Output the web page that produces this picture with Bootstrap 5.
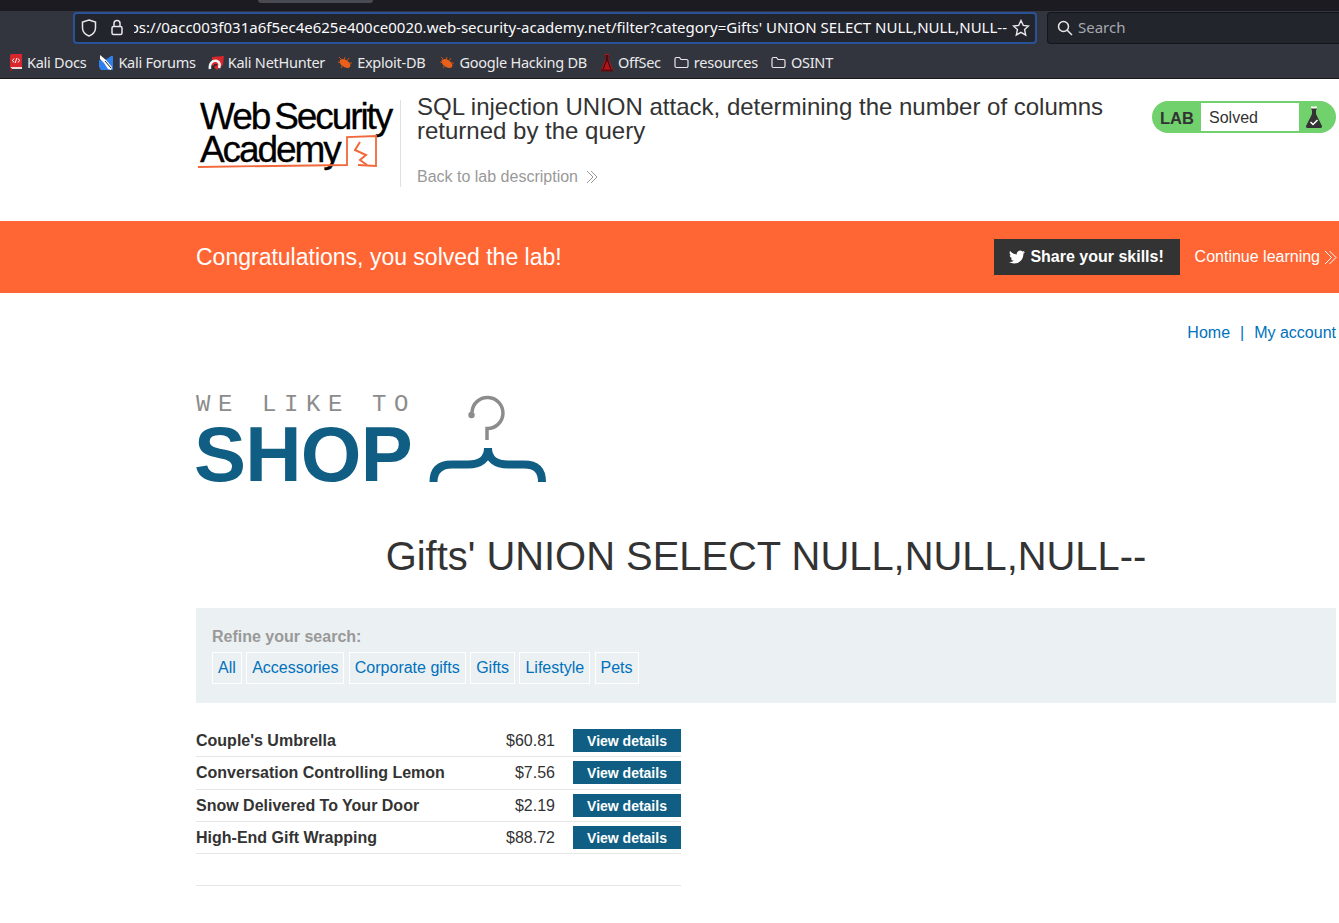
<!DOCTYPE html>
<html lang="en">
<head>
  <meta charset="UTF-8" />
  <title>SQL injection UNION attack</title>
  <link href="https://cdn.jsdelivr.net/npm/bootstrap@5.3.0/dist/css/bootstrap.min.css" rel="stylesheet" />
  <style>
    html, body { height: 923px; overflow: hidden; }
    body { font-family: "Liberation Sans", Arial, sans-serif; font-size: 16px; color: #333; background: #fff; }
    a { text-decoration: none; color: #0071bc; }

    /* browser chrome */
    .browser { height: 79px; background: #32353d; border-bottom: 1px solid #17181c; font-family: "Noto Sans", sans-serif; }
    .tabstrip { height: 11px; background: #1c1b22; padding-left: 258px; }
    .tabstrip-active { width: 115px; height: 3px; background: #4a4b52; border-radius: 0 0 3px 3px; }
    .toolbar { height: 33px; padding-left: 73px; gap: 10px; }
    .urlbar { width: 964px; height: 32px; background: #23252c; border: 2px solid #2a5298; border-radius: 4px; color: #fbfbfe; padding: 0 5px 0 6px; }
    .urltext { width: 873px; margin-left: 10px; overflow: hidden; font-size: 15px; white-space: nowrap; letter-spacing: 0; flex-shrink: 0; }
    .urltext span { flex-shrink: 0; }
    .lockicon { margin-left: 13px; }
    .searchbar { flex: 1; height: 32px; background: #23252c; border: 1px solid #14151a; border-right: 0; border-radius: 4px 0 0 4px; color: #a8a9b0; font-size: 15px; padding-left: 9px; gap: 5px; }
    .bookmarks { height: 34px; padding: 3px 0 0 9px; color: #eaeaec; font-size: 14.5px; letter-spacing: -.25px; gap: 12px; }
    .bookmarks span { gap: 4px; }
    .bookmarks .foldermark { gap: 5px; margin-left: 1px; }
    .bookmarks .bmshift { margin-left: 2px; }
    .bookmarks .bmshift-sm { margin-left: 1px; }

    /* lab header */
    .page { padding: 0 3px 0 196px; }
    .labhead { height: 142px; padding-top: 21px; }
    .logobox { width: 205px; height: 87px; flex-shrink: 0; border-right: 1px solid #e0e0e0; position: relative; padding-left: 4px; color: #000; white-space: nowrap; }
    .logotext { font-size: 37px; line-height: 33px; letter-spacing: -2.1px; word-spacing: -3px; -webkit-text-stroke: .3px #000; }
    .logomark { position: absolute; left: 0; top: 0; }
    .labtitle { padding-left: 16px; width: 735px; }
    .labtitle h2 { font-size: 24px; line-height: 24px; margin: -5px 0 22px; font-weight: 400; color: #333; }
    .backlink { color: #999; gap: 8px; }
    .labstatus { width: 184px; height: 32px; margin-top: 1px; margin-left: auto; background: #70d16d; border-radius: 16px; padding: 0 0 0 8px; }
    .labstatus b { width: 41px; font-size: 16.5px; padding-top: 2px; }
    .labstate { width: 98px; height: 28px; background: #fff; padding: 1px 0 0 8px; }
    .labflask { flex: 1; padding-left: 6px; }

    /* congratulations banner */
    .solvedbar { height: 72px; background: #ff6633; color: #fff; margin-left: -196px; margin-right: -3px; padding: 0 3px 0 196px; }
    .solvedbar h4 { font-size: 23px; font-weight: 400; margin: 2px 0 0; }
    .sharebtn { width: 186px; height: 36px; background: #333; color: #fff; font-weight: 700; gap: 5px; margin-left: auto; }
    .continuelink { color: #fff; margin-left: 15px; gap: 4px; }
    .continuelink svg { margin-right: -1px; }

    /* shop */
    .toplinks { padding-top: 28px; height: 102px; color: #0071bc; }
    .toplinks i { font-style: normal; padding: 0 10px; }
    .shoplogo { height: 92px; gap: 14px; }
    .shopword { width: 216px; flex-shrink: 0; }
    .shopname-top { font-family: "Liberation Mono", monospace; color: #8c8c8c; font-size: 24px; line-height: 18px; letter-spacing: 7.6px; white-space: pre; padding-top: 1px; }
    .shopname-big { font-weight: 700; font-size: 78px; line-height: 68px; color: #105e83; letter-spacing: -.8px; margin: 6px 0 0 -2px; }
    .gifttitle { font-size: 39.9px; line-height: 46px; text-align: center; margin: 46px 0 29px; font-weight: 400; color: #333; }
    .filterbox { height: 95px; background: #ebf0f2; padding: 19px 16px 0; }
    .filterbox p { color: #999; font-weight: 700; margin: 0 0 5px; line-height: 20px; }
    .filterbox a { border: 1px solid #fff; padding: 3px 5px 3px; margin-right: 4.4px; line-height: 24px; height: 32px; }

    .products { width: 485px; margin-top: 21.4px; }
    .products td { height: 32.4px; padding: .5px 0 0; vertical-align: middle; border-bottom: 1px solid #e6e6e6; color: #333; }
    .products .prodname { font-weight: 700; width: 282px; }
    .products .prodprice { text-align: right; width: 77px; }
    .products .prodbtn { width: 126px; padding: 0 0 0 18px; }
    .viewbtn { display: block; width: 108px; height: 23px; line-height: 24px; background: #105e83; color: #fff; text-align: center; font-weight: 700; font-size: 14px; }
    .endrule { width: 485px; border-top: 1px solid #e6e6e6; margin-top: 30.6px; }
  </style>
</head>
<body>
  <!-- Browser chrome -->
  <div class="browser">
    <div class="tabstrip"><div class="tabstrip-active"></div></div>
    <div class="toolbar d-flex align-items-center">
      <div class="urlbar d-flex align-items-center">
        <svg width="16" height="18" viewBox="0 0 16 18" fill="none" stroke="#e8e8ea" stroke-width="1.5" style="flex:none"><path d="M8 1 L14.5 3 V9 C14.5 13 11 16 8 17 C5 16 1.5 13 1.5 9 V3 Z"/></svg>
        <svg class="lockicon" width="14" height="17" viewBox="0 0 14 17" fill="none" stroke="#e8e8ea" stroke-width="1.5" style="flex:none"><rect x="2" y="7.5" width="10" height="8" rx="1.5"/><path d="M4 7.5 V4.5 A3 3 0 0 1 10 4.5 V7.5"/></svg>
        <div class="urltext d-flex justify-content-end"><span>https://0acc003f031a6f5ec4e625e400ce0020.web-security-academy.net/filter?category=Gifts' UNION SELECT NULL,NULL,NULL--</span></div>
        <svg width="18" height="18" viewBox="0 0 18 18" class="ms-auto" fill="none" stroke="#e8e8ea" stroke-width="1.4" style="flex:none"><path d="M9 1.5 L11.3 6.4 L16.5 7 L12.6 10.6 L13.7 16 L9 13.3 L4.3 16 L5.4 10.6 L1.5 7 L6.7 6.4 Z"/></svg>
      </div>
      <div class="searchbar d-flex align-items-center">
        <svg width="16" height="16" viewBox="0 0 16 16" fill="none" stroke="#e8e8ea" stroke-width="1.5"><circle cx="6.5" cy="6.5" r="5"/><path d="M10.2 10.2 L15 15"/></svg>
        <span>Search</span>
      </div>
    </div>
    <div class="bookmarks d-flex align-items-center">
      <span class="d-flex align-items-center">
        <svg width="14" height="17" viewBox="0 0 14 17"><path d="M1 1.5 A1.5 1.5 0 0 1 2.5 0 H13 V13 H1 Z" fill="#d9262c"/><path d="M1 13 H13 V15 H3 Z" fill="#f0d8d8"/><path d="M1 13 L3 15 V17 H1 Z" fill="#9c1a1e"/><path d="M5 4.5 L3.5 6.5 L5 8.5 M9 4.5 L10.5 6.5 L9 8.5 M7.8 4 L6.2 9" fill="none" stroke="#fff" stroke-width="1"/></svg>
        Kali Docs</span>
      <span class="d-flex align-items-center">
        <svg width="16" height="16" viewBox="0 0 16 16"><path d="M1 5 L6 6 L13 1 H15 V15 H3 L1 12 Z" fill="#2f80ed"/><path d="M2 0 L8 5 L14 12 L13 15 L10 14 L6 8 L2 4 Z" fill="#fff"/><path d="M7 6 L13 13" stroke="#22242a"/></svg>
        Kali Forums</span>
      <span class="d-flex align-items-center">
        <svg width="16" height="16" viewBox="0 0 16 16" fill="none"><path d="M4 2 L16 1 L15 10 L9 15 L4 10 Z" fill="#d9262c"/><path d="M2 14 C1 8 5 5 9 6 C12 7 12 10 11 13" stroke="#f2f2f2" stroke-width="2.6"/><path d="M5 14 C5 11 7 9 9 10" stroke="#22242a" stroke-width="1.4"/></svg>
        Kali NetHunter</span>
      <span class="d-flex align-items-center">
        <svg width="16" height="14" viewBox="0 0 16 14"><ellipse cx="8" cy="7.5" rx="6" ry="3.6" transform="rotate(32 8 7.5)" fill="#e8601c"/><path d="M2 1 L5 4 M8 1 L7 4 M1 6 L4 7 M12 2 L10 5 M4 12 L6 9 M15 7 L12 7" stroke="#c9500f" stroke-width="1"/></svg>
        Exploit-DB</span>
      <span class="bmshift d-flex align-items-center">
        <svg width="16" height="14" viewBox="0 0 16 14"><ellipse cx="8" cy="7.5" rx="6" ry="3.6" transform="rotate(32 8 7.5)" fill="#e8601c"/><path d="M2 1 L5 4 M8 1 L7 4 M1 6 L4 7 M12 2 L10 5 M4 12 L6 9 M15 7 L12 7" stroke="#c9500f" stroke-width="1"/></svg>
        Google Hacking DB</span>
      <span class="bmshift-sm d-flex align-items-center">
        <svg width="14" height="18" viewBox="0 0 14 18"><path d="M5 0 H9 V6 L13.5 17 H.5 L5 6 Z" fill="#b3141a"/><path d="M6.2 1 V7 L3 15.5 M7.8 1 V7 L11 15.5" fill="none" stroke="#1b0b0b" stroke-width="1"/><rect x="1" y="15.5" width="12" height="2" fill="#5d0a0d"/></svg>
        OffSec</span>
      <span class="foldermark d-flex align-items-center">
        <svg width="15" height="13" viewBox="0 0 15 13" fill="none" stroke="#e8e8ea" stroke-width="1.2"><path d="M1 3 A1.5 1.5 0 0 1 2.5 1.5 H5.5 L7 3.5 H12.5 A1.5 1.5 0 0 1 14 5 V10 A1.5 1.5 0 0 1 12.5 11.5 H2.5 A1.5 1.5 0 0 1 1 10 Z"/></svg>
        resources</span>
      <span class="foldermark d-flex align-items-center">
        <svg width="15" height="13" viewBox="0 0 15 13" fill="none" stroke="#e8e8ea" stroke-width="1.2"><path d="M1 3 A1.5 1.5 0 0 1 2.5 1.5 H5.5 L7 3.5 H12.5 A1.5 1.5 0 0 1 14 5 V10 A1.5 1.5 0 0 1 12.5 11.5 H2.5 A1.5 1.5 0 0 1 1 10 Z"/></svg>
        OSINT</span>
    </div>
  </div>

  <div class="page">
    <!-- Lab header -->
    <div class="labhead d-flex align-items-start">
      <div class="logobox">
        <div class="logotext"><div>Web Security</div><div>Academy</div></div>
        <svg class="logomark" width="204" height="90" viewBox="6 10 204 90" fill="none" stroke="#f2683a" stroke-width="1.8">
          <path d="M8 77 L120 75.5 L157 75 L157 47 L186 46 L186 76 L168 75"/>
          <path d="M170 52 L165 60 L176 65 L170 70 L177 75" stroke-width="2"/>
        </svg>
      </div>
      <div class="labtitle">
        <h2>SQL injection UNION attack, determining the number of columns returned by the query</h2>
        <a class="backlink d-inline-flex align-items-center" href="#">Back to lab description
          <svg width="12" height="14" viewBox="0 0 12 14" fill="none" stroke="#999" stroke-width="1"><path d="M1 1 L7 7 L1 13 M5 1 L11 7 L5 13"/></svg>
        </a>
      </div>
      <div class="labstatus d-flex align-items-center">
        <b>LAB</b>
        <div class="labstate d-flex align-items-center">Solved</div>
        <div class="labflask d-flex align-items-center">
          <svg width="18" height="24" viewBox="0 0 18 24"><path d="M6 3 H12 V4.5 H11 V9 L17 21 Q17.5 23 15.5 23 H2.5 Q0.5 23 1 21 L7 9 V4.5 H6 Z" fill="#333"/><rect x="6" y="1.5" width="6" height="2" fill="#fff"/><path d="M5.5 17 L8 19.5 L12.5 15" fill="none" stroke="#fff" stroke-width="1.5"/></svg>
        </div>
      </div>
    </div>

    <!-- Solved banner -->
    <div class="solvedbar d-flex align-items-center">
      <h4>Congratulations, you solved the lab!</h4>
      <a class="sharebtn d-flex align-items-center justify-content-center" href="#">
        <svg width="16" height="16" viewBox="0 0 24 24" fill="#fff"><path d="M23.953 4.57a10 10 0 01-2.825.775 4.958 4.958 0 002.163-2.723c-.951.555-2.005.959-3.127 1.184a4.92 4.92 0 00-8.384 4.482C7.69 8.095 4.067 6.13 1.64 3.162a4.822 4.822 0 00-.666 2.475c0 1.71.87 3.213 2.188 4.096a4.904 4.904 0 01-2.228-.616v.06a4.923 4.923 0 003.946 4.827 4.996 4.996 0 01-2.212.085 4.936 4.936 0 004.604 3.417 9.867 9.867 0 01-6.102 2.105c-.39 0-.779-.023-1.17-.067a13.995 13.995 0 007.557 2.209c9.053 0 13.998-7.496 13.998-13.985 0-.21 0-.42-.015-.63A9.935 9.935 0 0024 4.59z"/></svg>
        Share your skills!
      </a>
      <a class="continuelink d-flex align-items-center" href="#">Continue learning
        <svg width="13" height="15" viewBox="0 0 13 15" fill="none" stroke="#fff" stroke-width="1"><path d="M1 1 L7.5 7.5 L1 14 M5.5 1 L12 7.5 L5.5 14"/></svg>
      </a>
    </div>

    <!-- Shop -->
    <div class="toplinks d-flex justify-content-end"><a href="#">Home</a><i>|</i><a href="#">My account</a></div>
    <div class="shoplogo d-flex align-items-start">
      <div class="shopword"><div class="shopname-top">WE LIKE TO</div><div class="shopname-big">SHOP</div></div>
      <svg width="125" height="92" viewBox="236 10 125 92" fill="none">
        <path d="M282 27 A15.5 15.5 0 1 1 297 43.5 V55" stroke="#8c8c8c" stroke-width="3.5"/>
        <circle cx="281.5" cy="30" r="3.2" fill="#8c8c8c"/>
        <path d="M243.5 97 C243.5 85 250 79.5 262 79.5 H278 C290 79.5 298 74 298 63 C298 74 306 79.5 318 79.5 H334 C346 79.5 352 85 352 97" stroke="#105e83" stroke-width="8"/>
      </svg>
    </div>
    <h1 class="gifttitle">Gifts' UNION SELECT NULL,NULL,NULL--</h1>

    <div class="filterbox">
      <p>Refine your search:</p>
      <div class="d-flex">
        <a href="#">All</a><a href="#">Accessories</a><a href="#">Corporate gifts</a><a href="#">Gifts</a><a href="#">Lifestyle</a><a href="#">Pets</a>
      </div>
    </div>

    <table class="products">
      <tbody>
        <tr><td class="prodname">Couple's Umbrella</td><td class="prodprice">$60.81</td><td class="prodbtn"><a class="viewbtn" href="#">View details</a></td></tr>
        <tr><td class="prodname">Conversation Controlling Lemon</td><td class="prodprice">$7.56</td><td class="prodbtn"><a class="viewbtn" href="#">View details</a></td></tr>
        <tr><td class="prodname">Snow Delivered To Your Door</td><td class="prodprice">$2.19</td><td class="prodbtn"><a class="viewbtn" href="#">View details</a></td></tr>
        <tr><td class="prodname">High-End Gift Wrapping</td><td class="prodprice">$88.72</td><td class="prodbtn"><a class="viewbtn" href="#">View details</a></td></tr>
      </tbody>
    </table>
    <div class="endrule"></div>
  </div>

  <script src="https://cdn.jsdelivr.net/npm/bootstrap@5.3.0/dist/js/bootstrap.bundle.min.js"></script>
</body>
</html>
